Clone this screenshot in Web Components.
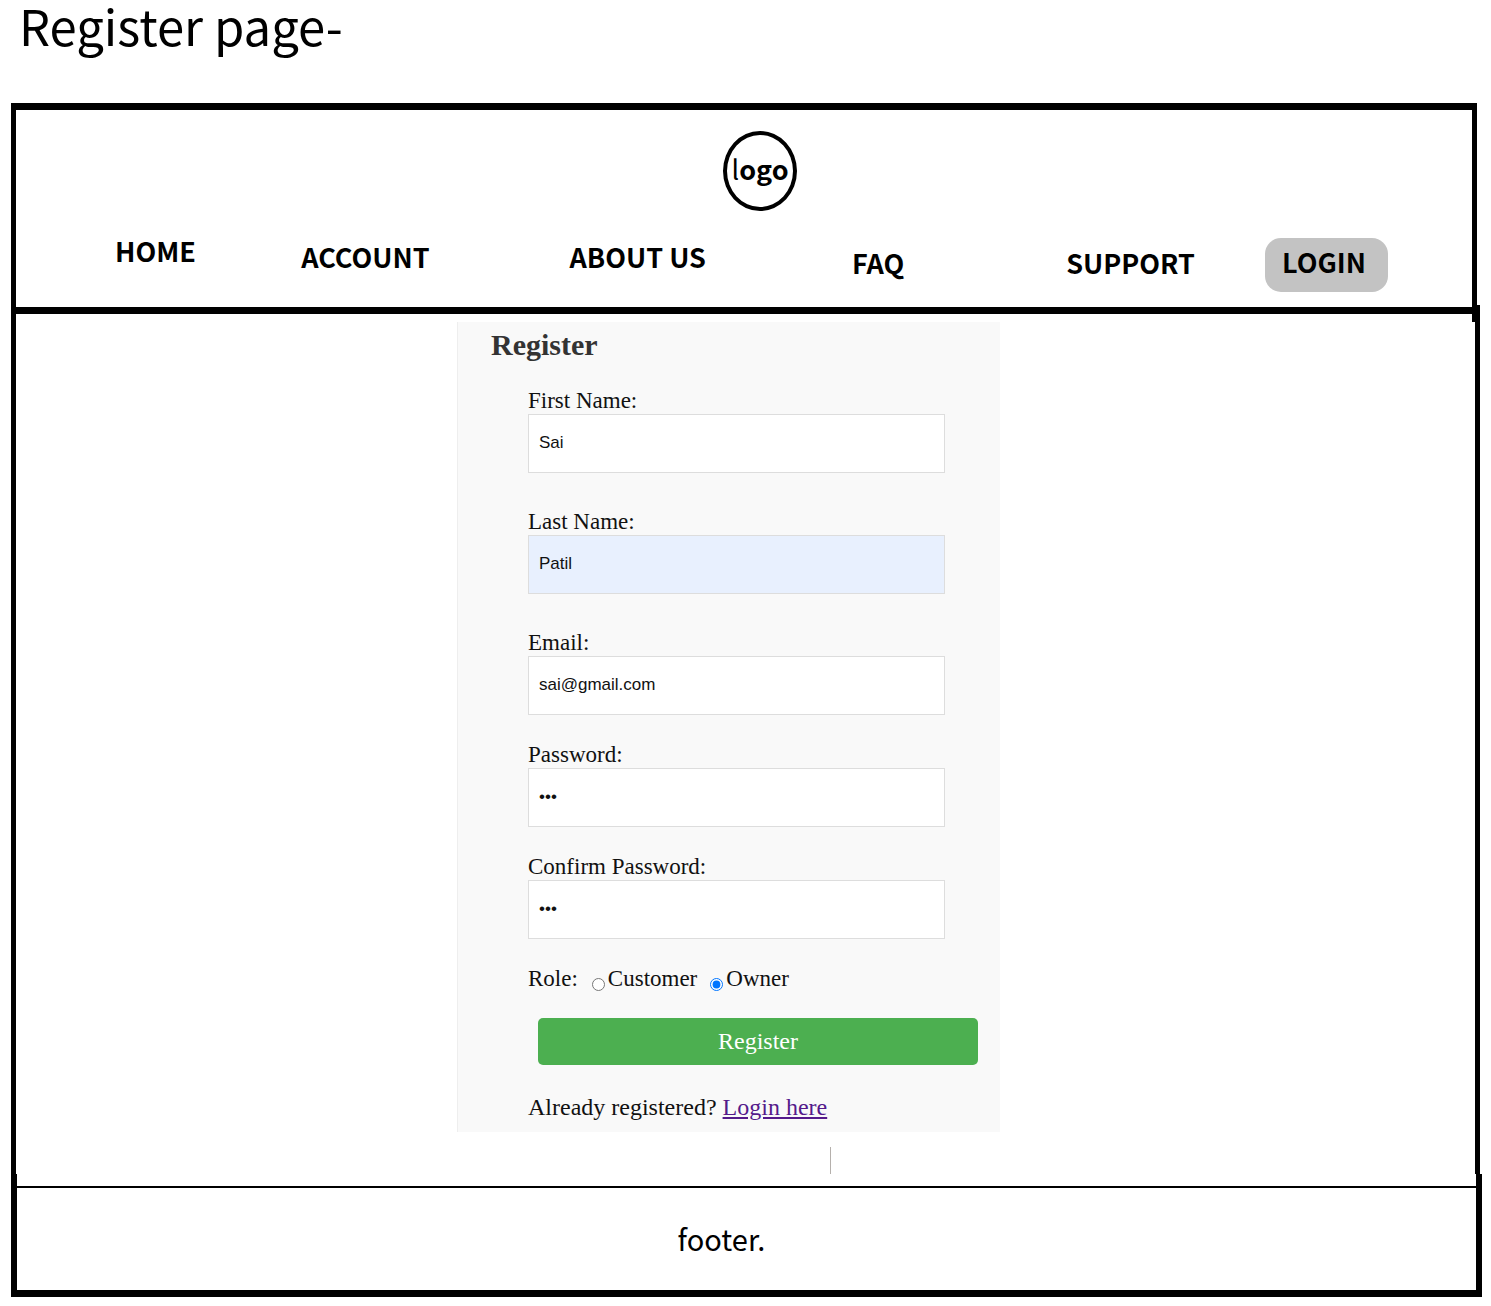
<!DOCTYPE html>
<html lang="en">
<head>
<meta charset="utf-8">
<meta name="viewport" content="width=device-width, initial-scale=1">
<title>Register page</title>
<style>
  body { margin: 0; background: #fff; color: #000; font-family: "Noto Sans CJK SC", "Noto Sans", sans-serif; }
</style>
</head>
<body>
<register-page></register-page>

<script>
const define = (name, html, setup) => {
  const template = document.createElement('template');
  template.innerHTML = html;
  customElements.define(name, class extends HTMLElement {
    constructor() {
      super();
      this.attachShadow({ mode: 'open' }).append(template.content.cloneNode(true));
    }
    connectedCallback() {
      if (setup) setup(this, this.shadowRoot);
    }
  });
};

define('site-logo', `
  <style>
    :host { display: block; }
    div { box-sizing: border-box; width: 74px; height: 80px; padding-bottom: 4px; border: 4px solid #000; border-radius: 50%;
          display: flex; align-items: center; justify-content: center; font-size: 27px; line-height: 32px; }
  </style>
  <div><span>l<b>ogo</b></span></div>`);

define('nav-link', `
  <style>
    :host { display: block; padding-bottom: 14px; }
    :host([tier="top"]) { align-self: start; }
    :host([tier="middle"]) { align-self: center; }
    :host([tier="low"]) { align-self: end; }
    a { display: block; color: inherit; text-decoration: none; white-space: nowrap;
        font-size: 27px; font-weight: 700; line-height: 30px; }
  </style>
  <a href="#"><slot></slot></a>`);

define('login-button', `
  <style>
    :host { display: block; align-self: end; }
    button { box-sizing: border-box; width: 100%; height: 54px; padding: 0 5px 6px 0; border: 0; border-radius: 16px;
             background: #c3c3c3; color: #000; font-family: inherit; font-size: 27px; font-weight: 700; line-height: 30px; }
  </style>
  <button type="button"><slot></slot></button>`);

define('site-header', `
  <style>
    :host { display: block; position: relative; margin: 0 14px 0 11px; border: solid #000; border-width: 7px 5px; }
    /* overlapping strokes where the header frame meets the body frame */
    :host::before, :host::after { content: ""; position: absolute; background: #000; }
    :host::before { width: 8px; height: 9px; right: -8px; bottom: -7px; }
    :host::after { width: 5px; height: 15px; right: -5px; bottom: -15px; }
    .logo { display: flex; justify-content: center; padding: 21px 0 25px 32px; }
    nav { display: grid; height: 56px; padding: 0 5.8% 15px 6.8%;
          grid-template-columns: 186fr 268fr 282fr 214fr 199fr 122fr; }
  </style>
  <div class="logo"><site-logo></site-logo></div>
  <nav>
    <nav-link tier="top">HOME</nav-link>
    <nav-link tier="middle">ACCOUNT</nav-link>
    <nav-link tier="middle">ABOUT US</nav-link>
    <nav-link tier="low">FAQ</nav-link>
    <nav-link tier="low">SUPPORT</nav-link>
    <login-button>LOGIN</login-button>
  </nav>`);

define('form-field', `
  <style>
    :host { display: block; margin-bottom: 27px; }
    :host([spaced]) { margin-bottom: 36px; }
    label { display: block; font-size: 23px; line-height: 26px; }
    input { display: block; box-sizing: border-box; width: 100%; height: 59px; padding: 0 10px 2px; margin: 0;
            border: 1px solid #ddd; border-radius: 0; background: #fff; color: #111; outline: 0;
            font-family: "Liberation Sans", Arial, sans-serif; font-size: 17px; }
    :host([autofilled]) input { background: #e8f0fe; }
  </style>
  <label for="control"></label>
  <input id="control">`, (host, root) => {
    const input = root.querySelector('input');
    root.querySelector('label').textContent = host.getAttribute('label');
    input.type = host.getAttribute('type') || 'text';
    input.value = host.getAttribute('value') || '';
  });

define('role-picker', `
  <style>
    :host { display: block; font-size: 23px; line-height: 26px; }
    fieldset { display: flex; border: 0; margin: 0; padding: 0; min-width: 0; }
    span { margin-right: 14px; }
    label { margin-right: 13px; display: flex; }
    input { width: 13px; height: 13px; margin: 12px 3px 0 0; }
  </style>
  <fieldset aria-label="Role">
    <span>Role:</span>
    <label><input type="radio" name="role" value="customer">Customer</label>
    <label><input type="radio" name="role" value="owner" checked>Owner</label>
  </fieldset>`);

define('register-form', `
  <style>
    :host { display: block; box-sizing: border-box; width: 543px; max-width: 100%; padding: 5px 22px 12px 33px;
            border-left: 1px solid #eee; background: #f9f9f9; color: #111;
            font-family: "Liberation Serif", "Times New Roman", serif; }
    h1 { margin: 0 0 25px; color: #333; font-size: 30px; line-height: 36px; }
    form { padding-left: 37px; }
    .fields { padding-right: 33px; }
    button { display: block; box-sizing: border-box; width: calc(100% - 10px); height: 47px; margin: 26px 0 29px 10px; padding: 0;
             border: 0; border-radius: 5px; background: #4caf50; color: #fff; font-family: inherit; font-size: 24px; }
    p { margin: 0; font-size: 24px; line-height: 26px; }
    a { color: #551a8b; }
  </style>
  <h1>Register</h1>
  <form>
    <div class="fields">
      <form-field label="First Name:" value="Sai" spaced></form-field>
      <form-field label="Last Name:" value="Patil" spaced autofilled></form-field>
      <form-field label="Email:" type="email" value="sai@gmail.com"></form-field>
      <form-field label="Password:" type="password" value="abc"></form-field>
      <form-field label="Confirm Password:" type="password" value="abc"></form-field>
      <role-picker></role-picker>
    </div>
    <button type="button">Register</button>
    <p>Already registered? <a href="#">Login here</a></p>
  </form>`);

define('site-main', `
  <style>
    :host { display: block; margin: 0 11px; border: solid #000; border-width: 0 5px; }
    .card { display: flex; justify-content: center; padding: 8px 34px 15px 0; }
    .caret { width: 1px; height: 27px; margin-left: 55.8%; background: #b5b0ac; }
  </style>
  <div class="card"><slot></slot></div>
  <div class="caret"></div>`);

define('site-footer', `
  <style>
    :host { display: block; margin: 0 9px 9px 11px; border: solid #000; border-width: 0 6px 7px; padding-top: 12px; }
    footer { border-top: 2px solid #000; padding: 32px 50px 34px 0; text-align: center; font-size: 29px; line-height: 36px; }
  </style>
  <footer><slot></slot></footer>`);

define('register-page', `
  <style>
    :host { display: block; }
    .title { padding: 0 19px 53px; font-size: 49px; line-height: 50px; }
  </style>
  <div class="title">Register page-</div>
  <site-header></site-header>
  <site-main><register-form></register-form></site-main>
  <site-footer>footer.</site-footer>`);
</script>
</body>
</html>
